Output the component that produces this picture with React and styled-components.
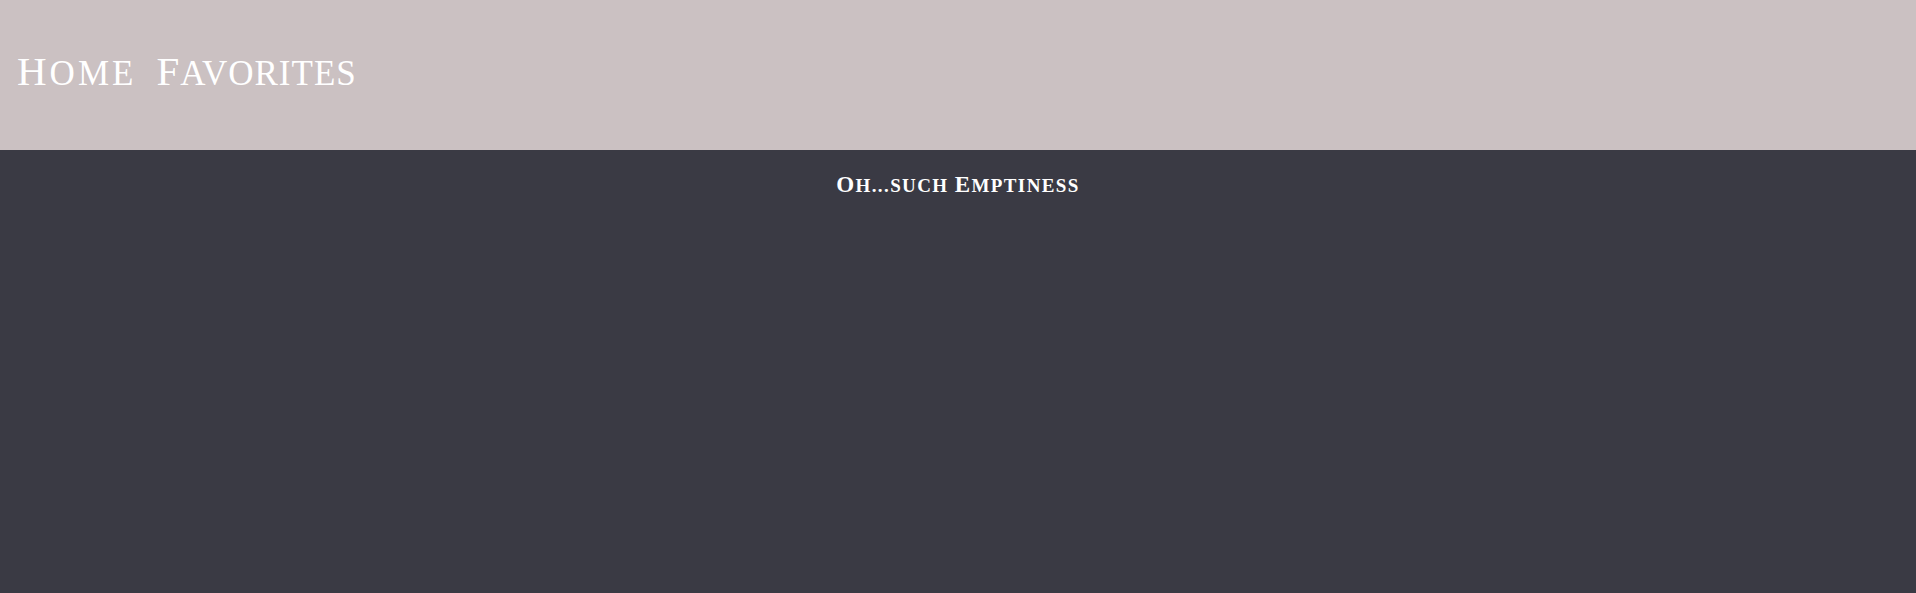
import React from 'react';
import styled, { createGlobalStyle } from 'styled-components';

const GlobalStyle = createGlobalStyle`
    html, body {
        margin: 0;
        padding: 0;
        background: #3a3a44;
    }
    body {
        font-family: "Liberation Serif", "DejaVu Serif", serif;
    }
`;

const Page = styled.div`
    min-height: 100vh;
    background: #3a3a44;
    display: flex;
    flex-direction: column;
`;

const Header = styled.header`
    height: 150px;
    background: #cbc1c2;
    display: flex;
    align-items: center;
    padding: 0 17px 8px;
    box-sizing: border-box;
`;

const Nav = styled.nav`
    display: flex;
    align-items: baseline;
    gap: 20px;
`;

const NavLink = styled.a`
    color: #ffffff;
    font-size: 35px;
    line-height: 1;
    text-transform: uppercase;
    letter-spacing: ${p => p.$spacing}px;
    text-decoration: none;
    cursor: pointer;
`;

const Cap = styled.span`
    font-size: ${p => p.$size}px;
`;

const Main = styled.main`
    display: flex;
    justify-content: center;
    padding-top: 23px;
`;

const Empty = styled.h2`
    margin: 0;
    color: #ffffff;
    font-size: 19px;
    line-height: 1;
    font-weight: bold;
    text-transform: uppercase;
    letter-spacing: 1.4px;
`;

const App = () => {
    return (
        <Page>
            <GlobalStyle />
            <Header>
                <Nav>
                    <NavLink $spacing={3}><Cap $size={41}>H</Cap>ome</NavLink>
                    <NavLink $spacing={1}><Cap $size={41}>F</Cap>avorites</NavLink>
                </Nav>
            </Header>
            <Main>
                <Empty><Cap $size={23}>O</Cap>h...such <Cap $size={23}>E</Cap>mptiness</Empty>
            </Main>
        </Page>
    );
};

export default App;
